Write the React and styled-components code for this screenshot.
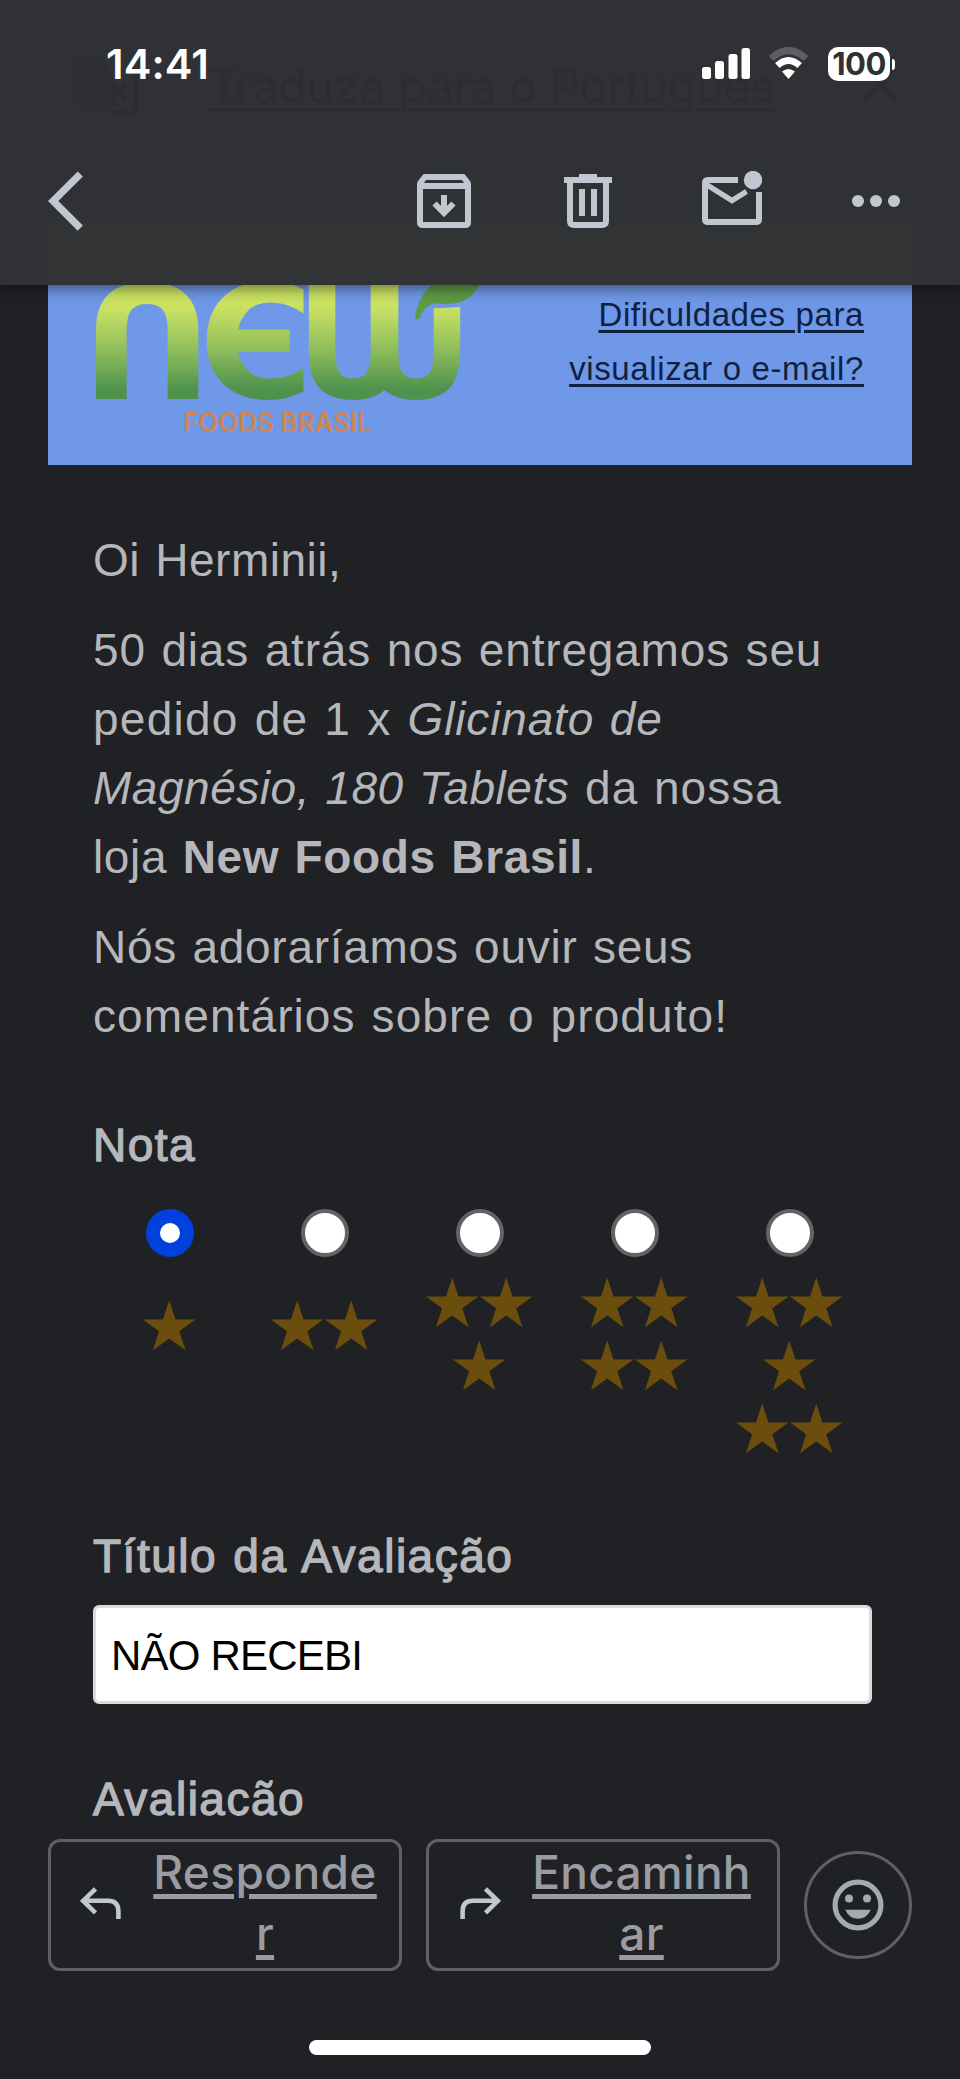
import React from "react";
import styled, { createGlobalStyle } from "styled-components";

const GlobalStyle = createGlobalStyle`
  * { box-sizing: border-box; }
  body { margin: 0; background: #202124; }
`;

const Screen = styled.div`
  width: 960px;
  height: 2079px;
  display: flex;
  flex-direction: column;
  overflow: hidden;
  background: #202124;
  font-family: "Liberation Sans", Arial, sans-serif;
`;

/* ---------- top chrome ---------- */

const Header = styled.header`
  position: relative;
  z-index: 2;
  flex: none;
  height: 285px;
  background: #303134;
  box-shadow: 0 3px 14px rgba(0, 0, 0, 0.5);
`;

const Backdrop = styled.div`
  position: absolute;
  inset: 0;
  overflow: hidden;
`;

const BackdropBanner = styled.div`
  position: absolute;
  left: 48px;
  right: 48px;
  top: 218px;
  bottom: 0;
  background: #323335;
`;

const BackdropTranslate = styled.div`
  position: absolute;
  left: 78px;
  top: 56px;
  width: 820px;
  display: flex;
  align-items: flex-start;
  color: #2c2d31;
`;

const TranslateText = styled.span`
  margin: 0 82px 0 70px;
  width: 572px;
  font: 400 46px/60px Inter, sans-serif;
  letter-spacing: 0.1px;
  white-space: nowrap;
  text-decoration: underline;
  text-decoration-thickness: 3px;
  text-underline-offset: 5px;
`;

const StatusBar = styled.div`
  position: relative;
  height: 130px;
  padding: 0 65px 0 106px;
  display: flex;
  justify-content: space-between;
  align-items: flex-start;
`;

const Clock = styled.div`
  padding-top: 39px;
  font: 600 41.5px/50px Inter, sans-serif;
  letter-spacing: 0.1px;
  color: #fff;
`;

const StatusIcons = styled.div`
  padding-top: 47px;
  display: flex;
  align-items: flex-start;
`;

const Battery = styled.div`
  margin-left: 19px;
  display: flex;
  align-items: center;
`;

const BatteryBody = styled.div`
  width: 62px;
  height: 34px;
  border-radius: 10px;
  background: #fff;
  color: #303134;
  font: 700 31px/34px Inter, sans-serif;
  letter-spacing: -0.6px;
  text-align: center;
`;

const BatteryTip = styled.div`
  width: 3px;
  height: 11px;
  margin-left: 2px;
  border-radius: 0 4px 4px 0;
  background: #fff;
`;

const Toolbar = styled.nav`
  position: relative;
  height: 142px;
  padding: 0 60px 0 48px;
  display: flex;
  align-items: center;
  color: #c1c7d0;
`;

const ToolButton = styled.button`
  display: flex;
  padding: 0;
  border: 0;
  background: none;
  color: inherit;
  margin-left: ${(p) => p.$gap || 0}px;
`;

/* ---------- message ---------- */

const Message = styled.main`
  flex: none;
  height: 1531px;
  overflow: hidden;
`;

const Banner = styled.section`
  height: 181px;
  margin: 0 48px;
  padding: 0 48px;
  display: flex;
  justify-content: space-between;
  background: #6f99e8;
  border-bottom: 1px solid #17203d;
`;

const BannerLink = styled.a`
  padding-top: 3px;
  text-align: right;
  font-size: 33px;
  line-height: 54px;
  letter-spacing: 0.62px;
  white-space: nowrap;
  color: #10213f;
  text-decoration: underline;
  text-decoration-thickness: 3px;
  text-underline-offset: 4px;
`;

const Content = styled.section`
  padding: 60px 88px 0 93px;
  color: #b6b7ba;
`;

const Paragraph = styled.p`
  margin: 0 0 21px;
  font-size: 46px;
  line-height: 69px;
  word-spacing: 2px;
  white-space: nowrap;
`;

const Line = styled.span`
  display: block;
  letter-spacing: ${(p) => p.$ls}px;
`;

const Product = styled.em`
  letter-spacing: ${(p) => p.$ls}px;
`;

const FieldLabel = styled.h2`
  margin: ${(p) => p.$top}px 0 0;
  font-size: 46px;
  line-height: 69px;
  font-weight: 400;
  letter-spacing: 1.5px;
  word-spacing: 2px;
  white-space: nowrap;
  -webkit-text-stroke: 1.3px currentColor;
`;

const Ratings = styled.div`
  height: 341px;
  margin-left: -1px;
  padding-top: 29px;
  display: grid;
  grid-template-columns: repeat(5, 155px);
`;

const Rating = styled.label`
  display: flex;
  flex-direction: column;
  align-items: center;
`;

const Radio = styled.span`
  width: 48px;
  height: 48px;
  border-radius: 50%;
  background: #fff;
  border: ${(p) => (p.$checked ? "14px solid #0040dd" : "4.5px solid #636366")};
`;

const Stars = styled.span`
  margin-top: ${(p) => (p.$short ? 38 : 15)}px;
  padding-right: 8px;
  font: 400 68.5px/63px "DejaVu Sans", sans-serif;
  letter-spacing: -7.3px;
  text-align: center;
  color: #6b4e0d;
`;

const TextField = styled.div`
  width: 779px;
  height: 99px;
  margin-top: 14px;
  padding: 0 15px;
  border: 3px solid #dcdcdc;
  border-radius: 6px;
  background: #fff;
  color: #000;
  font-size: 42px;
  line-height: 95px;
  letter-spacing: -0.8px;
`;

/* ---------- bottom actions ---------- */

const Actions = styled.footer`
  flex: 1;
  background: #202124;
  padding-top: 23px;
  display: flex;
  flex-direction: column;
  align-items: center;
`;

const ActionRow = styled.div`
  width: 864px;
  display: flex;
  align-items: center;
  gap: 24px;
`;

const ActionButton = styled.button`
  width: 354px;
  height: 132px;
  padding: 0 0 4px ${(p) => p.$inset}px;
  display: flex;
  align-items: center;
  border: 3px solid #5f6063;
  border-radius: 12px;
  background: none;
  color: #bfc7cf;
`;

const ActionText = styled.span`
  width: ${(p) => p.$w}px;
  margin-left: ${(p) => p.$gap}px;
  font: 500 46px/61px Inter, sans-serif;
  letter-spacing: ${(p) => p.$ls}px;
  text-align: center;
  color: #9a9ca1;
  text-decoration: underline;
  text-decoration-thickness: 5px;
  text-underline-offset: 5px;
  white-space: nowrap;
`;

const EmojiButton = styled.button`
  width: 108px;
  height: 108px;
  padding: 0;
  display: flex;
  align-items: center;
  justify-content: center;
  border: 3px solid #5f6063;
  border-radius: 50%;
  background: none;
`;

const HomeIndicator = styled.div`
  width: 342px;
  height: 15px;
  margin-top: 69px;
  border-radius: 8px;
  background: #fff;
`;

/* ---------- drawings ---------- */

const SignalIcon = () => (
  <svg width="48" height="33" viewBox="702 47 48 33" fill="#fff">
    <rect x="702" y="67" width="9" height="12" rx="2.5" />
    <rect x="715" y="61" width="9" height="18" rx="2.5" />
    <rect x="728.5" y="54" width="9" height="25" rx="2.5" />
    <rect x="741.5" y="48" width="8.5" height="31" rx="2.5" />
  </svg>
);

const Wifi = styled.svg`
  margin-left: 18px;
`;

const WifiIcon = () => (
  <Wifi width="41" height="33" viewBox="0 0 41 33" fill="none">
    <path d="M3 11.5 Q20.5 -4.5 38 11.5" stroke="#5d5e61" strokeWidth="7" />
    <path d="M9.3 18.5 Q20.5 8.5 31.7 18.5" stroke="#fff" strokeWidth="6.8" />
    <path d="M14 24.5 Q20.5 19.5 27 24.5 L20.5 32 Z" fill="#fff" />
  </Wifi>
);

const TranslateIcon = () => (
  <svg width="60" height="58" viewBox="0 0 60 58" fill="none" stroke="currentColor">
    <path d="M4 1 H26 L41 50 H4 Q0 50 0 46 V5 Q0 1 4 1Z" fill="currentColor" stroke="none" opacity="0.5" />
    <path d="M24 21 H16 M23 16 A9 9 0 1 0 24 24" stroke="#303134" strokeWidth="3" />
    <path d="M34 14 H58 V56 H33 L29 50" strokeWidth="2.5" />
    <path d="M33 27 L48 45 M48 27 L33 45" strokeWidth="3" />
  </svg>
);

const Close = styled.svg`
  margin-top: 10px;
`;

const CloseIcon = () => (
  <Close width="36" height="36" viewBox="0 0 36 36" stroke="currentColor" strokeWidth="4">
    <path d="M2 2 L34 34 M34 2 L2 34" />
  </Close>
);

const BackIcon = () => (
  <svg width="36" height="60" viewBox="48 171 36 60" fill="none" stroke="currentColor" strokeWidth="7.4">
    <path d="M80.3 174 L53.2 201 L80.3 228.2" />
  </svg>
);

const ArchiveIcon = () => (
  <svg width="54" height="54" viewBox="0 0 54 54" fill="none" stroke="currentColor" strokeWidth="6">
    <path d="M3 12 V48 Q3 51 6 51 H48 Q51 51 51 48 V12" />
    <path
      d="M8 0 H46 Q47.5 0 48.5 1.2 L53 7 Q54 8.5 54 10 V15 H0 V10 Q0 8.5 1 7 L5.5 1.2 Q6.5 0 8 0Z M9 6 L7 9 H47 L45 6Z"
      fill="currentColor"
      fillRule="evenodd"
      stroke="none"
    />
    <path d="M27 21 V38 M17.5 29.5 L27 39 L36.5 29.5" />
  </svg>
);

const TrashIcon = () => (
  <svg width="48" height="54" viewBox="0 0 48 54" fill="none" stroke="currentColor" strokeWidth="6">
    <path d="M0 6 H48 M15 3 H33" />
    <path d="M6 6 V47 Q6 51 10 51 H38 Q42 51 42 47 V6" />
    <path d="M18 15 V42 M30 15 V42" />
  </svg>
);

const MailIcon = () => (
  <svg width="60" height="60" viewBox="702 171 60 60" fill="none" stroke="currentColor" strokeWidth="6">
    <path d="M738 180 H708 Q705 180 705 183 V219 Q705 222 708 222 H756 Q759 222 759 219 V192" />
    <path d="M705.5 184 L732 200.5 L746.5 191.5" strokeWidth="5.4" />
    <circle cx="753" cy="180" r="9.2" fill="currentColor" stroke="none" />
  </svg>
);

const MoreIcon = () => (
  <svg width="48" height="12" viewBox="0 0 48 12" fill="currentColor">
    <circle cx="6" cy="6" r="6" />
    <circle cx="24" cy="6" r="6" />
    <circle cx="42" cy="6" r="6" />
  </svg>
);

const ReplyIcon = ({ flip }) => (
  <svg width="41" height="33" viewBox="0 0 41 33" fill="none" stroke="currentColor" strokeWidth="4.6">
    <g transform={flip ? "matrix(-1 0 0 1 41 0)" : undefined}>
      <path d="M15.5 1.8 L3.2 13.8 L15.5 25.8 M4 13.8 H28 Q38.4 13.8 38.4 24.5 V32" />
    </g>
  </svg>
);

const SmileIcon = () => (
  <svg width="52" height="52" viewBox="-26 -26 52 52" fill="#a2abb0">
    <circle r="22.9" fill="none" stroke="#a2abb0" strokeWidth="5.2" />
    <circle cx="-9" cy="-6.5" r="4" />
    <circle cx="9" cy="-6.5" r="4" />
    <path d="M-12.8 4.8 H12.8 Q8.5 13.8 0 13.8 Q-8.5 13.8 -12.8 4.8Z" />
  </svg>
);

/* The wordmark is set in heavy rounded glyphs; the last letter is a pair of U bowls sharing a stem. */
const BrandLogo = () => (
  <svg width="390" height="160" viewBox="96 285 390 160" role="img" aria-label="new Foods Brasil">
    <defs>
      <linearGradient id="lime" gradientUnits="userSpaceOnUse" x1="0" y1="-114" x2="0" y2="0">
        <stop offset="0.2" stopColor="#cbe263" />
        <stop offset="0.55" stopColor="#93c05c" />
        <stop offset="0.92" stopColor="#4f924d" />
      </linearGradient>
    </defs>
    <g fill="url(#lime)" fontFamily="DejaVu Sans" fontWeight="700" fontSize="156">
      <text transform="translate(81 399) scale(1.16 1)">Ո</text>
      <text transform="translate(199 398)">Є</text>
      <text transform="translate(296 398) scale(0.9 1)" letterSpacing="-56.6">UU</text>
    </g>
    <path d="M424 284 H486 V303 Q448 310 424 307Z" fill="#6f99e8" />
    <path d="M432 284 H480 Q472 300 456 303 Q446 305 436 303 Q424 305 419 319 L415 319 Q416 300 432 284Z" fill="#5f9a45" />
    <text x="183" y="432" fill="#cc8656" fontFamily="Inter" fontWeight="600" fontSize="26.5" textLength="189" lengthAdjust="spacingAndGlyphs">
      FOODS BRASIL
    </text>
  </svg>
);

const ratings = [["★"], ["★★"], ["★★", "★"], ["★★", "★★"], ["★★", "★", "★★"]];

export default function App() {
  return (
    <Screen>
      <GlobalStyle />
      <Header>
        <Backdrop aria-hidden="true">
          <BackdropBanner />
          <BackdropTranslate>
            <TranslateIcon />
            <TranslateText>Traduza para o Português</TranslateText>
            <CloseIcon />
          </BackdropTranslate>
        </Backdrop>
        <StatusBar>
          <Clock>14:41</Clock>
          <StatusIcons>
            <SignalIcon />
            <WifiIcon />
            <Battery>
              <BatteryBody>100</BatteryBody>
              <BatteryTip />
            </Battery>
          </StatusIcons>
        </StatusBar>
        <Toolbar>
          <ToolButton><BackIcon /></ToolButton>
          <ToolButton $gap={333}><ArchiveIcon /></ToolButton>
          <ToolButton $gap={93}><TrashIcon /></ToolButton>
          <ToolButton $gap={90}><MailIcon /></ToolButton>
          <ToolButton $gap={90}><MoreIcon /></ToolButton>
        </Toolbar>
      </Header>

      <Message>
        <Banner>
          <BrandLogo />
          <BannerLink>Dificuldades para<br />visualizar o e-mail?</BannerLink>
        </Banner>
        <Content>
          <Paragraph><Line $ls={0.5}>Oi Herminii,</Line></Paragraph>
          <Paragraph>
            <Line $ls={0.82}>50 dias atrás nos entregamos seu </Line>
            <Line $ls={1.25}>pedido de 1 x <Product $ls={0.85}>Glicinato de</Product> </Line>
            <Line $ls={1}><Product $ls={0.53}>Magnésio, 180 Tablets</Product> da nossa </Line>
            <Line $ls={0.65}>loja <b>New Foods Brasil</b>.</Line>
          </Paragraph>
          <Paragraph>
            <Line $ls={0.72}>Nós adoraríamos ouvir seus </Line>
            <Line $ls={1.1}>comentários sobre o produto!</Line>
          </Paragraph>
          <FieldLabel $top={60}>Nota</FieldLabel>
          <Ratings>
            {ratings.map((rows, i) => (
              <Rating key={i}>
                <Radio $checked={i === 0} />
                <Stars $short={i < 2}>
                  {rows.map((row, j) => <div key={j}>{row}</div>)}
                </Stars>
              </Rating>
            ))}
          </Ratings>
          <FieldLabel $top={1}>Título da Avaliação</FieldLabel>
          <TextField>NÃO RECEBI</TextField>
          <FieldLabel $top={61}>Avaliação</FieldLabel>
        </Content>
      </Message>

      <Actions>
        <ActionRow>
          <ActionButton $inset={29}>
            <ReplyIcon />
            <ActionText $w={224} $gap={32} $ls={0.4}>Responde<br />r</ActionText>
          </ActionButton>
          <ActionButton $inset={31}>
            <ReplyIcon flip />
            <ActionText $w={219} $gap={31} $ls={0.3}>Encaminh<br />ar</ActionText>
          </ActionButton>
          <EmojiButton><SmileIcon /></EmojiButton>
        </ActionRow>
        <HomeIndicator />
      </Actions>
    </Screen>
  );
}
